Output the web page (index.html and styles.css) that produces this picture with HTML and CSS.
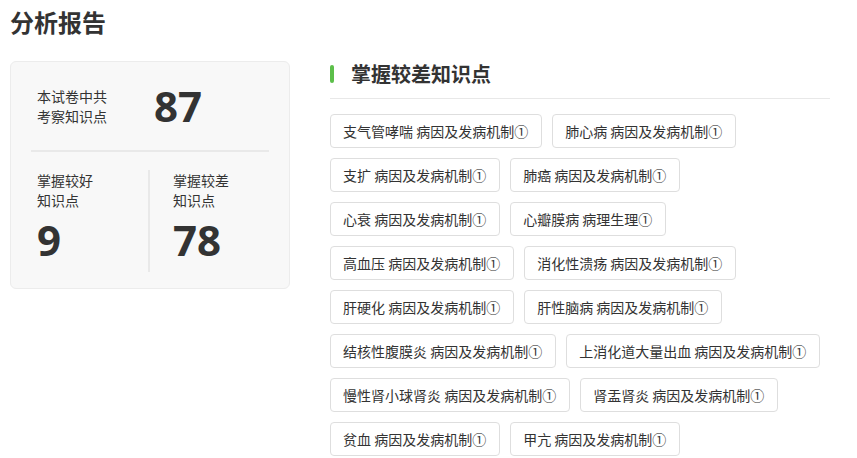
FILE: index.html
```html
<!DOCTYPE html>
<html lang="zh-CN">

<head>
    <meta charset="UTF-8">
    <meta name="viewport" content="width=device-width, initial-scale=1.0">
    <title>分析报告</title>
    <link rel="stylesheet" href="styles.css">
</head>

<body>
    <h2 class="page-title">分析报告</h2>
    <div class="report">
        <div class="summary">
            <div class="summary-top">
                <div class="label">本试卷中共<br>考察知识点</div>
                <div class="num">87</div>
            </div>
            <div class="summary-bottom">
                <div class="col col-good">
                    <div class="label">掌握较好<br>知识点</div>
                    <div class="num num-small">9</div>
                </div>
                <div class="col col-bad">
                    <div class="label">掌握较差<br>知识点</div>
                    <div class="num num-small">78</div>
                </div>
            </div>
        </div>
        <div class="weak">
            <h3 class="weak-heading">掌握较差知识点</h3>
            <div class="tags">
                <span class="tag">支气管哮喘 病因及发病机制①</span>
                <span class="tag">肺心病 病因及发病机制①</span>
                <span class="tag">支扩 病因及发病机制①</span>
                <span class="tag">肺癌 病因及发病机制①</span>
                <span class="tag">心衰 病因及发病机制①</span>
                <span class="tag">心瓣膜病 病理生理①</span>
                <span class="tag">高血压 病因及发病机制①</span>
                <span class="tag">消化性溃疡 病因及发病机制①</span>
                <span class="tag">肝硬化 病因及发病机制①</span>
                <span class="tag">肝性脑病 病因及发病机制①</span>
                <span class="tag">结核性腹膜炎 病因及发病机制①</span>
                <span class="tag">上消化道大量出血 病因及发病机制①</span>
                <span class="tag">慢性肾小球肾炎 病因及发病机制①</span>
                <span class="tag">肾盂肾炎 病因及发病机制①</span>
                <span class="tag">贫血 病因及发病机制①</span>
                <span class="tag">甲亢 病因及发病机制①</span>
            </div>
        </div>
    </div>
</body>

</html>
```

FILE: styles.css
```css
* {
    margin: 0;
    padding: 0;
    box-sizing: border-box;
}

body {
    padding: 0 10px;
    font-family: "Noto Sans CJK SC", "Noto Sans", sans-serif;
    color: #333;
    background: #fff;
}

.page-title {
    font-size: 24px;
    line-height: 36px;
    font-weight: 700;
    margin: 4px 0 21px;
}

.report {
    display: flex;
    gap: 40px;
}

/* left card */
.summary {
    width: 280px;
    flex-shrink: 0;
    align-self: flex-start;
    background: #f8f8f8;
    border: 1px solid #ececec;
    border-radius: 6px;
    padding: 19px 20px 16px;
}

.label {
    font-size: 14px;
    line-height: 20px;
}

.num {
    font-family: "Noto Sans", "Open Sans", sans-serif;
    font-size: 42px;
    font-weight: 700;
    line-height: 50px;
}

.summary-top {
    display: flex;
    align-items: center;
    gap: 47px;
    padding: 0 6px;
    margin-bottom: 19px;
}

.summary-bottom {
    display: flex;
    border-top: 2px solid #e9e9e9;
    padding-top: 18px;
}

.col {
    width: 50%;
    padding-bottom: 7px;
}

.col-good {
    padding-left: 6px;
    border-right: 2px solid #e9e9e9;
}

.col-bad {
    padding-left: 23px;
}

.num-small {
    margin-top: 5px;
}

/* right list */
.weak {
    width: 500px;
}

.weak-heading {
    display: flex;
    align-items: center;
    gap: 17px;
    font-size: 20px;
    line-height: 26px;
    font-weight: 700;
    padding-bottom: 11px;
    border-bottom: 1px solid #e8e8e8;
    margin-bottom: 15px;
}

.weak-heading::before {
    content: "";
    width: 4px;
    height: 18px;
    border-radius: 2px;
    background: #5cbf4a;
}

.tags {
    display: flex;
    flex-wrap: wrap;
    gap: 10px;
}

.tag {
    height: 34px;
    line-height: 32px;
    padding: 0 13px 0 12px;
    font-size: 14px;
    white-space: nowrap;
    border: 1px solid #dedede;
    border-radius: 4px;
    background: #fff;
}
```
